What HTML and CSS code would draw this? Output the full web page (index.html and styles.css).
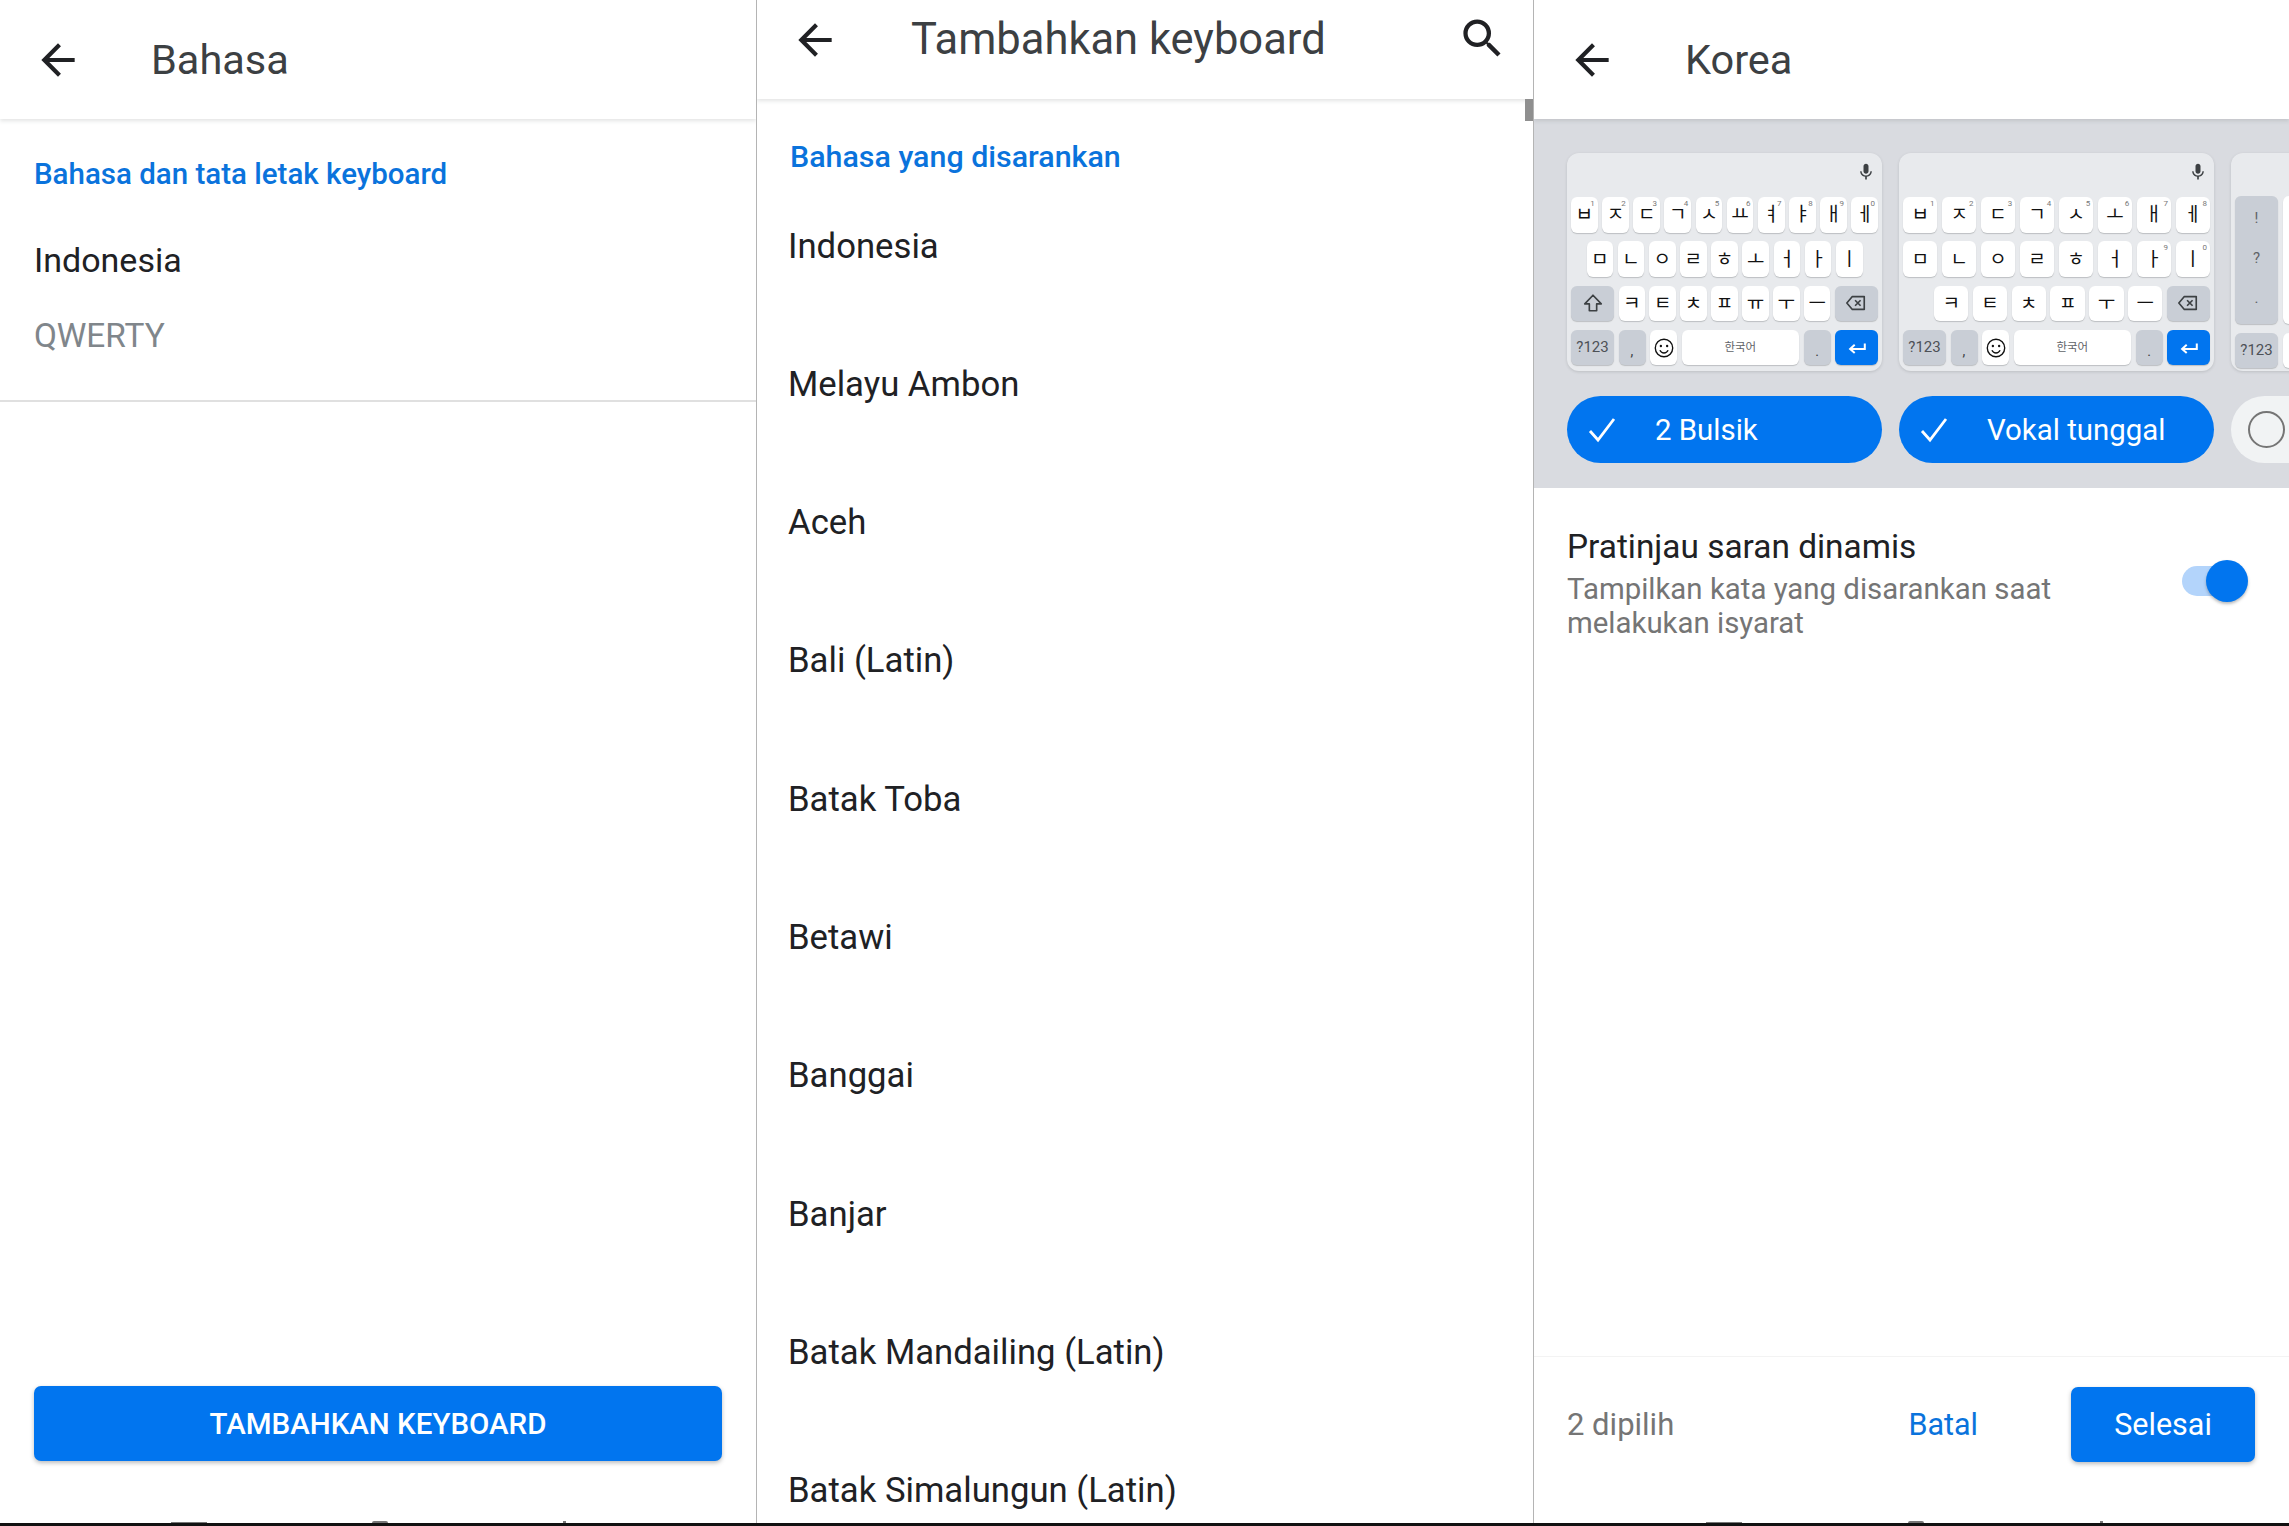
FILE: index.html
```html
<!DOCTYPE html>
<html lang="id">
<head>
<meta charset="utf-8">
<title>Keyboard</title>
<link rel="stylesheet" href="styles.css">
</head>
<body>
<svg class="defs" width="0" height="0" aria-hidden="true">
  <symbol id="i-back" viewBox="0 0 24 24"><path d="M20 11H7.83l5.59-5.59L12 4l-8 8 8 8 1.41-1.41L7.83 13H20v-2z"/></symbol>
  <symbol id="i-search" viewBox="0 0 24 24"><path d="M15.5 14h-.79l-.28-.27A6.47 6.47 0 0 0 16 9.5 6.5 6.5 0 1 0 9.5 16c1.61 0 3.09-.59 4.23-1.57l.27.28v.79l5 4.99L20.49 19l-4.99-5zm-6 0C7.01 14 5 11.99 5 9.5S7.01 5 9.5 5 14 7.01 14 9.5 11.99 14 9.5 14z"/></symbol>
  <symbol id="i-mic" viewBox="0 0 24 24"><path d="M12 14c1.66 0 3-1.34 3-3V5c0-1.66-1.34-3-3-3S9 3.34 9 5v6c0 1.66 1.34 3 3 3zm5.3-3c0 3-2.54 5.1-5.3 5.1S6.7 14 6.7 11H5c0 3.41 2.72 6.23 6 6.72V21h2v-3.28c3.28-.48 6-3.3 6-6.72h-1.7z"/></symbol>
  <symbol id="i-shift" viewBox="0 0 24 24"><path d="M12 3.5 3 13h5v7.5h8V13h5z" fill="none" stroke="currentColor" stroke-width="1.8" stroke-linejoin="round"/></symbol>
  <symbol id="i-del" viewBox="0 0 24 24"><path d="M8 5h13v14H8l-6-7z" fill="none" stroke="currentColor" stroke-width="1.8" stroke-linejoin="round"/><path d="m11 9 6 6m0-6-6 6" fill="none" stroke="currentColor" stroke-width="1.8"/></symbol>
  <symbol id="i-emoji" viewBox="0 0 24 24"><circle cx="12" cy="12" r="9.5" fill="none" stroke="currentColor" stroke-width="1.5"/><circle cx="8.6" cy="9.8" r="1.3" fill="currentColor"/><circle cx="15.4" cy="9.8" r="1.3" fill="currentColor"/><path d="M7.5 14.5c1 2 2.6 3 4.500 3s3.500-1 4.500-3" fill="none" stroke="currentColor" stroke-width="1.500"/></symbol>
  <symbol id="i-enter" viewBox="0 0 24 24"><path d="M20.500 7v6H5M9.500 8.500 4.500 13l5 4.500" fill="none" stroke="currentColor" stroke-width="2.200"/></symbol>
  <symbol id="i-check" viewBox="0 0 28 28"><path d="m2 15 8 9L26 3" fill="none" stroke="currentColor" stroke-width="2.800"/></symbol>
</svg>

<main class="screens">
  <section class="panel panel-first">
    <header class="appbar appbar-tall">
      <svg class="icon-back"><use href="#i-back"/></svg>
      <h1 class="appbar-title">Bahasa</h1>
    </header>
    <div class="panel-body">
      <h2 class="section-label section-label-first">Bahasa dan tata letak keyboard</h2>
      <div class="lang-row">
        <div class="lang-name">Indonesia</div>
        <div class="lang-layout">QWERTY</div>
      </div>
    </div>
    <footer class="bottom-bar">
      <button class="btn-wide">TAMBAHKAN KEYBOARD</button>
      <i class="nav-peek peek-a"></i><i class="nav-peek peek-b"></i><i class="nav-peek peek-c"></i>
    </footer>
  </section>

  <section class="panel panel-middle">
    <header class="appbar appbar-short">
      <svg class="icon-back"><use href="#i-back"/></svg>
      <h1 class="appbar-title appbar-title-wide">Tambahkan keyboard</h1>
      <svg class="icon-search"><use href="#i-search"/></svg>
      <i class="scroll-thumb"></i>
    </header>
    <div class="panel-body">
      <h2 class="section-label section-label-mid">Bahasa yang disarankan</h2>
      <ul class="lang-list">
        <li>Indonesia</li>
        <li>Melayu Ambon</li>
        <li>Aceh</li>
        <li>Bali (Latin)</li>
        <li>Batak Toba</li>
        <li>Betawi</li>
        <li>Banggai</li>
        <li>Banjar</li>
        <li>Batak Mandailing (Latin)</li>
        <li>Batak Simalungun (Latin)</li>
      </ul>
    </div>
  </section>

  <section class="panel panel-last">
    <header class="appbar appbar-tall appbar-raised">
      <svg class="icon-back"><use href="#i-back"/></svg>
      <h1 class="appbar-title">Korea</h1>
    </header>

    <div class="layouts">
      <div class="layout-col">
        <div class="kb">
          <svg class="kb-mic"><use href="#i-mic"/></svg>
          <div class="kb-row">
            <span class="key">ㅂ<sup>1</sup></span><span class="key">ㅈ<sup>2</sup></span><span class="key">ㄷ<sup>3</sup></span><span class="key">ㄱ<sup>4</sup></span><span class="key">ㅅ<sup>5</sup></span><span class="key">ㅛ<sup>6</sup></span><span class="key">ㅕ<sup>7</sup></span><span class="key">ㅑ<sup>8</sup></span><span class="key">ㅐ<sup>9</sup></span><span class="key">ㅔ<sup>0</sup></span>
          </div>
          <div class="kb-row kb-row-inset">
            <span class="key">ㅁ</span><span class="key">ㄴ</span><span class="key">ㅇ</span><span class="key">ㄹ</span><span class="key">ㅎ</span><span class="key">ㅗ</span><span class="key">ㅓ</span><span class="key">ㅏ</span><span class="key">ㅣ</span>
          </div>
          <div class="kb-row">
            <span class="key key-fn key-wide"><svg class="kb-icon"><use href="#i-shift"/></svg></span>
            <span class="key">ㅋ</span><span class="key">ㅌ</span><span class="key">ㅊ</span><span class="key">ㅍ</span><span class="key">ㅠ</span><span class="key">ㅜ</span><span class="key">ㅡ</span>
            <span class="key key-fn key-wide"><svg class="kb-icon"><use href="#i-del"/></svg></span>
          </div>
          <div class="kb-row">
            <span class="key key-fn key-wide key-sym">?123</span>
            <span class="key key-fn key-small key-punct">,</span>
            <span class="key key-small"><svg class="kb-icon"><use href="#i-emoji"/></svg></span>
            <span class="key key-space">한국어</span>
            <span class="key key-fn key-small key-punct">.</span>
            <span class="key key-enter key-wide"><svg class="kb-icon"><use href="#i-enter"/></svg></span>
          </div>
        </div>
        <div class="pill pill-on">
          <svg class="pill-check"><use href="#i-check"/></svg>
          <span>2 Bulsik</span>
        </div>
      </div>

      <div class="layout-col">
        <div class="kb">
          <svg class="kb-mic"><use href="#i-mic"/></svg>
          <div class="kb-row">
            <span class="key">ㅂ<sup>1</sup></span><span class="key">ㅈ<sup>2</sup></span><span class="key">ㄷ<sup>3</sup></span><span class="key">ㄱ<sup>4</sup></span><span class="key">ㅅ<sup>5</sup></span><span class="key">ㅗ<sup>6</sup></span><span class="key">ㅐ<sup>7</sup></span><span class="key">ㅔ<sup>8</sup></span>
          </div>
          <div class="kb-row">
            <span class="key">ㅁ</span><span class="key">ㄴ</span><span class="key">ㅇ</span><span class="key">ㄹ</span><span class="key">ㅎ</span><span class="key">ㅓ</span><span class="key">ㅏ<sup>9</sup></span><span class="key">ㅣ<sup>0</sup></span>
          </div>
          <div class="kb-row kb-row-shifted">
            <span class="key">ㅋ</span><span class="key">ㅌ</span><span class="key">ㅊ</span><span class="key">ㅍ</span><span class="key">ㅜ</span><span class="key">ㅡ</span>
            <span class="key key-fn key-wide"><svg class="kb-icon"><use href="#i-del"/></svg></span>
          </div>
          <div class="kb-row">
            <span class="key key-fn key-wide key-sym">?123</span>
            <span class="key key-fn key-small key-punct">,</span>
            <span class="key key-small"><svg class="kb-icon"><use href="#i-emoji"/></svg></span>
            <span class="key key-space">한국어</span>
            <span class="key key-fn key-small key-punct">.</span>
            <span class="key key-enter key-wide"><svg class="kb-icon"><use href="#i-enter"/></svg></span>
          </div>
        </div>
        <div class="pill pill-on">
          <svg class="pill-check"><use href="#i-check"/></svg>
          <span>Vokal tunggal</span>
        </div>
      </div>

      <div class="layout-col">
        <div class="kb">
          <div class="kb-tall">
            <span class="key key-fn key-wide key-stack"><b>!</b><b>?</b><b>.</b></span>
            <span class="key key-tall-next"></span>
          </div>
          <div class="kb-row">
            <span class="key key-fn key-wide key-sym">?123</span>
            <span class="key key-tall-next"></span>
          </div>
        </div>
        <div class="pill pill-off"><i class="pill-radio"></i></div>
      </div>
    </div>

    <div class="setting">
      <div class="setting-text">
        <div class="setting-title">Pratinjau saran dinamis</div>
        <div class="setting-sub">Tampilkan kata yang disarankan saat<br>melakukan isyarat</div>
      </div>
      <div class="toggle"><i class="toggle-thumb"></i></div>
    </div>

    <footer class="bottom-bar bottom-bar-actions">
      <span class="count">2 dipilih</span>
      <button class="btn-text">Batal</button>
      <button class="btn-done">Selesai</button>
      <i class="nav-peek peek-d"></i><i class="nav-peek peek-e"></i><i class="nav-peek peek-f"></i>
    </footer>
  </section>
</main>
<div class="black-edge"></div>
</body>
</html>
```

FILE: styles.css
```css
* { box-sizing: border-box; }
html, body { margin: 0; height: 100%; }
body {
  background: #fff;
  color: #202124;
  font-family: Roboto, "Noto Sans CJK KR", sans-serif;
  display: flex;
  flex-direction: column;
  overflow: hidden;
}
.defs { position: absolute; }
.screens { flex: 1; display: flex; min-height: 0; }
.black-edge { height: 3px; background: #111; }

.panel { display: flex; flex-direction: column; min-height: 0; overflow: hidden; position: relative; background: #fff; }
.panel-first { width: 756px; }
.panel-middle { width: 777px; border-left: 1px solid #b4b4b4; }
.panel-last { flex: 1; border-left: 1px solid #b4b4b4; }

.appbar { display: flex; align-items: center; flex-shrink: 0; background: #fff; box-shadow: 0 2px 4px rgba(60, 64, 67, .14); position: relative; z-index: 2; }
.appbar-tall { height: 119px; padding-left: 33px; }
.appbar-short { height: 99px; padding: 0 25px 20px 33px; }
.icon-back { width: 50px; height: 50px; fill: #202124; flex-shrink: 0; }
.icon-search { width: 51px; height: 51px; fill: #202124; margin-left: auto; margin-top: -2px; }
.appbar-title { margin: 0 0 0 68px; font-size: 41.5px; font-weight: 400; color: #3c4043; line-height: 50px; }
.appbar-title-wide { margin-left: 71px; font-size: 43.5px; }
.scroll-thumb { position: absolute; right: 0; top: 99px; width: 8px; height: 22px; background: #8f8f8f; }

.panel-body { flex: 1; min-height: 0; }
.section-label { margin: 0; font-size: 29.5px; font-weight: 500; color: #0a73dc; line-height: 36px; }
.section-label-first { padding: 37px 0 0 34px; }
.section-label-mid { padding: 40px 0 0 33px; font-size: 30.4px; }

.lang-row { margin-top: 41px; padding: 0 34px; border-bottom: 2px solid #e0e0e0; height: 169px; }
.lang-name { font-size: 34px; line-height: 54px; color: #202124; }
.lang-layout { font-size: 33.4px; line-height: 50px; color: #80868b; margin-top: 24px; }

.lang-list { list-style: none; margin: 1.5px 0 0; padding: 0 0 0 31px; }
.lang-list li { height: 138.3px; line-height: 138.3px; font-size: 34.7px; color: #202124; white-space: nowrap; }

.bottom-bar { height: 167px; flex-shrink: 0; padding: 30px 34px 0; position: relative; }
.btn-wide { display: block; width: 688px; height: 75px; border: 0; border-radius: 7px; background: #0175ef; color: #fff; font: 500 29.5px/75px Roboto, sans-serif; box-shadow: 0 2px 4px rgba(60, 64, 67, .35); padding: 1px 0 0; }

.nav-peek { position: absolute; bottom: 0; background: #777; height: 1px; }
.peek-a { left: 171px; width: 36px; }
.peek-b { left: 372px; width: 16px; height: 2px; border-radius: 8px 8px 0 0; }
.peek-c { left: 563px; width: 3px; height: 2px; }
.peek-d { left: 172px; width: 36px; }
.peek-e { left: 374px; width: 16px; height: 2px; border-radius: 8px 8px 0 0; }
.peek-f { left: 566px; width: 3px; height: 2px; }

.layouts { display: flex; gap: 17px; height: 369px; flex-shrink: 0; padding: 34px 0 0 33px; background: #d9dbe0; overflow: hidden; }
.layout-col { width: 315px; flex-shrink: 0; display: flex; flex-direction: column; gap: 25px; }

.kb { height: 218px; border-radius: 12px; background: #e8eaed; padding: 44px 4px 0; position: relative; display: flex; flex-direction: column; gap: 8.8px; box-shadow: 0 1px 3px rgba(60, 64, 67, .18); }
.kb-mic { position: absolute; right: 6px; top: 9px; width: 20px; height: 20px; fill: #3c4043; }
.kb-row { display: flex; gap: 4.5px; height: 35.5px; }
.kb-row-inset { padding: 0 15.5px; }
.kb-row-shifted { padding-left: 31px; }
.key { flex: 1 1 0; min-width: 0; position: relative; background: #fff; border-radius: 6px; box-shadow: 0 1px 1px rgba(60, 64, 67, .25); display: flex; align-items: center; justify-content: center; color: #111; font-size: 19px; line-height: 1; }
.key sup { position: absolute; right: 3px; top: 3px; font-size: 8px; line-height: 1; color: #777; }
.key-fn { background: #c9ced6; color: #3c4043; }
.key-wide { flex: 0 0 43px; }
.key-small { flex: 0 0 27px; }
.key-space { flex: 1 1 0; font-size: 11.5px; color: #5f6368; }
.key-enter { background: #0175ef; color: #fff; }
.key-sym { font-size: 15px; color: #4d5156; }
.key-punct { font-size: 14px; align-items: flex-end; padding-bottom: 7px; }
.kb-icon { width: 22px; height: 22px; }
.kb-tall { display: flex; gap: 4.5px; height: 128px; margin-top: -1px; }
.key-stack { flex-direction: column; justify-content: space-around; font-size: 15px; color: #5f6368; padding: 3px 0 6px; }
.key-stack b { font-weight: 400; }
.key-tall-next { flex: 0 0 262px; }

.pill { height: 67px; border-radius: 34px; flex-shrink: 0; display: flex; align-items: center; position: relative; font-size: 29.4px; }
.pill-on { background: #0175ef; color: #fff; padding-left: 88px; }
.pill-off { background: #f1f3f4; padding-left: 17px; }
.pill-check { position: absolute; left: 21px; top: 20px; width: 28px; height: 28px; }
.pill-radio { width: 37px; height: 37px; border-radius: 50%; border: 2px solid #757575; }

.setting { display: flex; align-items: flex-start; padding: 37px 0 0 33px; position: relative; flex: 1; min-height: 0; }
.setting-title { font-size: 33.4px; line-height: 44px; color: #202124; }
.setting-sub { font-size: 29.4px; line-height: 34px; color: #757575; margin-top: 3px; }
.toggle { position: absolute; left: 648px; top: 78px; width: 52px; height: 30px; border-radius: 15px; background: #b3d4fb; }
.toggle-thumb { position: absolute; right: -14px; top: -6px; width: 42px; height: 42px; border-radius: 50%; background: #0175ef; box-shadow: 0 2px 3px rgba(60, 64, 67, .35); }

.bottom-bar-actions { display: flex; align-items: flex-start; padding: 30px 0 0 33px; border-top: 1px solid #f3f3f3; }
.count { font-size: 31px; line-height: 75px; color: #757575; }
.btn-text { margin-left: auto; border: 0; background: none; padding: 0; font: 400 30.5px/75px Roboto, sans-serif; color: #0a73dc; }
.btn-done { margin: 0 34px 0 93px; width: 184px; height: 75px; border: 0; border-radius: 7px; background: #0175ef; color: #fff; font: 400 30.5px/75px Roboto, sans-serif; box-shadow: 0 2px 4px rgba(60, 64, 67, .35); padding: 0; }
```
